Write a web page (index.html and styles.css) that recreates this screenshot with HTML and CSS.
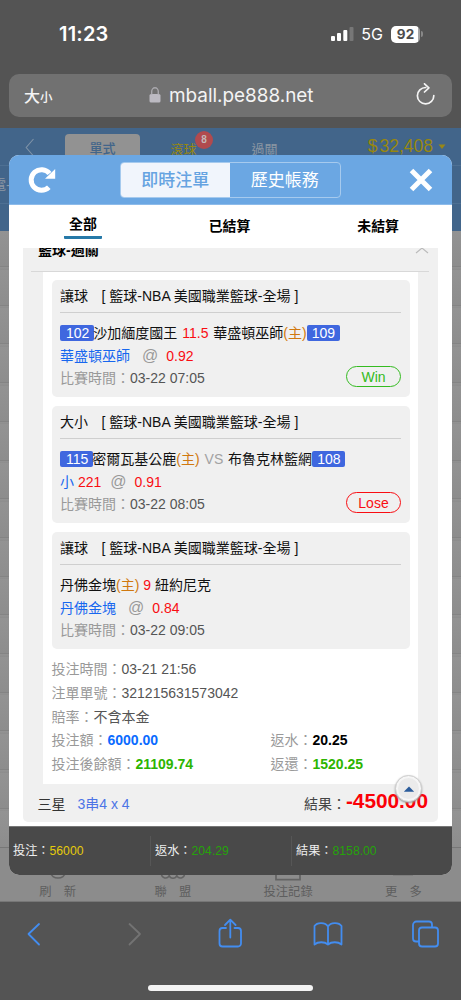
FILE: index.html
```html
<!DOCTYPE html>
<html lang="zh-Hant">
<head>
<meta charset="utf-8">
<title>即時注單</title>
<link rel="stylesheet" href="styles.css">
</head>
<body>
<div class="phone">
  <header class="status">
    <span class="time">11:23</span>
    <div class="status-right">
      <svg class="signal" width="24" height="16" viewBox="0 0 24 16"><rect x="0" y="10" width="4" height="5" rx="1" fill="#fff"/><rect x="6" y="7" width="4" height="8" rx="1" fill="#fff"/><rect x="12.300" y="4" width="4" height="11" rx="1" fill="#fff"/><rect x="18.500" y="1" width="4" height="14" rx="1" fill="#777"/></svg>
      <span class="net">5G</span>
      <span class="battery">92</span>
      <i class="battery-tip"></i>
    </div>
  </header>
  <div class="address">
    <span class="size">大<small>小</small></span>
    <div class="url">
      <svg width="12" height="16" viewBox="0 0 12 16"><rect x="0.5" y="7" width="11" height="8.5" rx="1.6" fill="#bcbac2"/><path d="M2.7 7.5V4.4a3.3 3.6 0 0 1 6.6 0v3.1" fill="none" stroke="#a9a8ad" stroke-width="1.4"/></svg>
      <span>mball.pe888.net</span>
    </div>
    <svg class="reload" width="20" height="24" viewBox="0 0 20 24"><path d="M9.700 4.500A8.200 8.200 0 1 0 17.800 12.600M8.500 .8l4.400 4-4.400 4.200" fill="none" stroke="#f4f4f4" stroke-width="1.7" stroke-linecap="round" stroke-linejoin="round"/></svg>
  </div>

  <main class="page">
    <nav class="topnav">
      <svg class="back" width="10" height="19" viewBox="0 0 10 19"><path d="M8.5 1 1.2 9.5l7.3 8.5" fill="none" stroke="#7f93a8" stroke-width="1.1"/></svg>
      <span class="topnav-tab on">單式</span>
      <span class="topnav-tab live">滾球<b class="badge">8</b></span>
      <span class="topnav-tab">過關</span>
      <span class="balance"><i>$</i>32,408</span>
      <svg class="caret" width="8" height="6" viewBox="0 0 8 6"><path d="M.5.5h7L4 5z" fill="#988717"/></svg>
    </nav>
    <div class="subnav">電-</div>
    <div class="subnav-low"></div>
    <div class="rows"></div>
    <nav class="bottomnav">
      <span><svg width="26" height="14" viewBox="0 0 26 14"><path d="M6 5a7 5 0 0 0 14 0" fill="none" stroke="#636363" stroke-width="1.6"/></svg><em>刷&emsp;新</em></span>
      <span><svg width="26" height="14" viewBox="0 0 26 14"><path d="M1.500 6a4 4 0 0 0 7.700 1.500 4 4 0 0 0 7.600 0A4 4 0 0 0 24.500 6" fill="none" stroke="#636363" stroke-width="1.5"/></svg><em>聯&emsp;盟</em></span>
      <span><svg width="26" height="14" viewBox="0 0 26 14"><path d="M1 0v11.600h24V0" fill="none" stroke="#636363" stroke-width="1.7"/></svg><em>投注記錄</em></span>
      <span><svg width="26" height="14" viewBox="0 0 26 14"><path d="M3 7h20" fill="none" stroke="#777" stroke-width="1.3"/></svg><em>更&emsp;多</em></span>
    </nav>
  </main>

  <footer class="toolbar">
    <svg width="40" height="40" viewBox="0 0 40 40"><path d="M25 10 14.5 20 25 30.5" class="ico"/></svg>
    <svg width="40" height="40" viewBox="0 0 40 40"><path d="M17.5 10 28 20 17.5 30.5" class="ico off"/></svg>
    <svg width="40" height="40" viewBox="0 0 40 40"><path d="M16 14h-3.500a3 3 0 0 0-3 3v12.500a3 3 0 0 0 3 3h15.500a3 3 0 0 0 3-3v-12.500a3 3 0 0 0-3-3h-3.500M20.300 23.500V6M15 11 20.300 5.700 25.600 11" class="ico"/></svg>
    <svg width="40" height="40" viewBox="0 0 40 40"><path d="M21 12.500C18.500 8 10 8 7.500 12v18.500c3.500-3 10-3 13.500 0 3.500-3 10-3 13.500 0V12C32 8 23.500 8 21 12.500zV30.500" class="ico"/></svg>
    <svg width="40" height="40" viewBox="0 0 40 40"><path d="M13.500 27.500h-2.500a3 3 0 0 1-3-3v-13.500a3.500 3.500 0 0 1 3.500-3.500h12.500a3 3 0 0 1 3 3v2.500" class="ico"/><rect x="14" y="13.500" width="19" height="19" rx="3" class="ico"/></svg>
  </footer>
  <i class="home-bar"></i>

  <section class="modal">
    <header class="modal-head">
      <svg class="refresh" width="28" height="28" viewBox="0 0 28 28"><path d="M20.800 21.200A10.300 10.300 0 1 1 21.500 7.500" fill="none" stroke="#fff" stroke-width="5"/><path d="M27.200 3v9.800H17z" fill="#fff"/></svg>
      <div class="switch"><b class="on">即時注單</b><b>歷史帳務</b></div>
      <svg class="close" width="24" height="24" viewBox="0 0 24 24"><path d="M2.500 2.500l19 19M21.500 2.500l-19 19" stroke="#fff" stroke-width="5"/></svg>
    </header>
    <nav class="tabs"><b class="on">全部</b><b>已結算</b><b>未結算</b></nav>
    <div class="scroll">
      <article class="slip">
        <header class="slip-head"><b>籃球-過關</b>
          <svg width="14" height="7" viewBox="0 0 14 7"><path d="M1 5l6-5 6 5" fill="none" stroke="#bbb" stroke-width="1.1"/></svg>
        </header>
        <div class="slip-body">
          <section class="bet">
            <h3>讓球<span>[ 籃球-NBA 美國職業籃球-全場 ]</span></h3>
            <p><i class="no first">102</i>沙加緬度國王 <em class="line">11.5</em> 華盛頓巫師<u>(主)</u><i class="no">109</i></p>
            <p><strong>華盛頓巫師</strong><i class="at">@</i><em>0.92</em></p>
            <p class="when">比賽時間：<span>03-22 07:05</span></p>
            <span class="result win">Win</span>
          </section>
          <section class="bet">
            <h3>大小<span>[ 籃球-NBA 美國職業籃球-全場 ]</span></h3>
            <p><i class="no first">115</i>密爾瓦基公鹿<u>(主)</u> <s class="line">VS</s> 布魯克林籃網<i class="no">108</i></p>
            <p><strong>小</strong> <em>221</em><i class="at near">@</i><em>0.91</em></p>
            <p class="when">比賽時間：<span>03-22 08:05</span></p>
            <span class="result lose">Lose</span>
          </section>
          <section class="bet">
            <h3>讓球<span>[ 籃球-NBA 美國職業籃球-全場 ]</span></h3>
            <p>丹佛金塊<u>(主)</u> <em>9</em> 紐約尼克</p>
            <p><strong>丹佛金塊</strong><i class="at">@</i><em>0.84</em></p>
            <p class="when">比賽時間：<span>03-22 09:05</span></p>
          </section>
          <div class="info">
            <p class="wide">投注時間：<span>03-21 21:56</span></p>
            <p class="wide">注單單號：<span>321215631573042</span></p>
            <p class="wide">賠率：<span>不含本金</span></p>
            <p>投注額：<b class="blue">6000.00</b></p><p>返水：<b class="black">20.25</b></p>
            <p>投注後餘額：<b class="green">21109.74</b></p><p>返還：<b class="green">1520.25</b></p>
          </div>
        </div>
        <footer class="slip-foot"><span>三星</span><span class="combo">3串4 x 4</span><span class="total">結果：</span><b>-4500.00</b></footer>
      </article>
    </div>
    <footer class="sum">
      <span>投注：<i class="gold">56000</i></span>
      <span>返水：<i>204.29</i></span>
      <span>結果：<i>8158.00</i></span>
    </footer>
    <div class="to-top"><svg width="12" height="6" viewBox="0 0 12 6"><path d="M.8 5.700 6 .5l5.200 5.200z" fill="#2b5c9b"/></svg></div>
  </section>
</div>
</body>
</html>
```

FILE: styles.css
```css
* { box-sizing: border-box; }
body, p, h3 { margin: 0; }
i, em { font-style: normal; }
u, s { text-decoration: none; }
svg { display: block; flex: none; }
body { font-family: "Liberation Sans", "Noto Sans CJK TC", sans-serif; font-size: 14px; }

.phone { position: relative; width: 461px; height: 1000px; overflow: hidden; display: flex; flex-direction: column; background: #545454; }

.status { height: 74px; padding: 0 38px 6px 59px; display: flex; align-items: center; justify-content: space-between; color: #fff; font-family: Inter, sans-serif; }
.time { font-size: 20px; font-weight: 600; line-height: 24px; letter-spacing: 0.2px; }
.status-right { display: flex; align-items: center; }
.net { font-size: 16px; line-height: 20px; margin-left: 6px; }
.battery { width: 29px; height: 17px; margin-left: 8px; border-radius: 5px; background: linear-gradient(90deg, #fff 92%, #a5a5a5 92%); color: #4c4c4c; font-size: 13.500px; font-weight: 700; line-height: 17px; text-align: center; }
.battery-tip { width: 2px; height: 6px; margin-left: 1px; border-radius: 0 2px 2px 0; background: #888; }

.address { height: 43px; margin: 0 9px 11px; padding: 0 16px 0 15px; border-radius: 10px; background: #717171; display: flex; align-items: center; color: #f4f4f4; }
.size { font-size: 16px; font-weight: 500; line-height: 20px; width: 125px; padding-top: 3px; }
.size small { font-size: 12.500px; }
.url { display: flex; align-items: center; gap: 8px; flex: 1; font-family: Inter, sans-serif; font-size: 18.900px; white-space: nowrap; }
.url svg { margin-bottom: 1px; }
.reload { margin-bottom: 2px; }

.page { height: 774px; flex: none; display: flex; flex-direction: column; background: #909090; }
.topnav { height: 37px; background: #42658a; display: flex; align-items: center; padding: 0 15px 0 25px; font-size: 13px; color: #8c97a3; }
.topnav-tab { width: 75px; text-align: center; line-height: 29px; margin: 6px 6px 0 0; }
.topnav-tab.on { margin-left: 30px; background: #929292; color: #42658a; border-radius: 4px 4px 0 0; height: 31px; font-weight: 500; }
.topnav-tab.live { position: relative; color: #98870f; }
.badge { position: absolute; left: 49px; top: -4px; width: 18px; height: 18px; border-radius: 50%; background: #b14a4e; color: #c4b9b9; font-size: 10px; line-height: 18px; }
.balance { font-size: 17.500px; color: #98870f; margin: 0 5px 0 auto; white-space: nowrap; }
.balance i { margin-right: 2px; }
.back { margin-top: 2px; }
.subnav { height: 38px; background: #42658a; border-top: 1px solid #4e7093; text-indent: -7px; font-size: 13px; line-height: 37px; color: #8c97a3; }
.subnav-low { height: 28px; background: #42658a; border-top: 1px solid #4e7093; }
.rows { flex: 1; background: repeating-linear-gradient(180deg, #939393 0, #8d8d8d 35px, #848484 35px, #848484 36px, #939393 36px, #8d8d8d 38.700px); }
.bottomnav { height: 55px; border-top: 1px solid #777; border-bottom: 1px solid #777; background: #8c8c8c; display: grid; grid-template-columns: repeat(4, 1fr); color: #5e5e5e; font-size: 12.300px; }
.bottomnav span { display: flex; flex-direction: column; align-items: center; padding-top: 20px; }
.bottomnav em { line-height: 20px; }

.toolbar { height: 65px; padding: 0 16px 2px 14px; display: flex; justify-content: space-between; align-items: center; }
.ico { fill: none; stroke: #438df0; stroke-width: 1.800; stroke-linecap: round; stroke-linejoin: round; }
.ico.off { stroke: #737373; }
.home-bar { width: 165px; height: 6px; border-radius: 3px; background: #f3f3f3; margin: 18px auto 0 148px; }

.modal { position: absolute; left: 9px; top: 155px; width: 443px; height: 720px; border-radius: 10px; overflow: hidden; background: #fff; display: flex; flex-direction: column; }
.modal-head { height: 50px; flex: none; background: #6ba7e3; border-bottom: 1px solid #8dbbea; display: flex; align-items: center; justify-content: space-between; padding: 0 19px; }
.switch { display: flex; width: 221px; height: 36px; border: 1px solid #a6caee; border-radius: 4px; overflow: hidden; margin-right: 5px; }
.switch b { flex: 1; font-weight: 400; font-size: 17px; line-height: 35px; text-align: center; color: #fff; }
.switch .on { background: #f1f5fc; color: #66a3e1; font-weight: 500; }
.tabs { height: 43px; flex: none; display: flex; justify-content: space-between; align-items: center; padding: 0 53px 0 55px; color: #000; font-size: 13.900px; }
.tabs b { line-height: 18px; padding-bottom: 1px; }
.tabs .on { border-bottom: 3px solid #2679a8; padding: 0 5px 3px; border-radius: 1px; margin-top: 1px; }
.scroll { height: 578px; flex: none; overflow: hidden; padding: 0 14px; }
.slip { height: 574px; background: #f0f0f0; border-radius: 0 0 5px 5px; display: flex; flex-direction: column; }
.slip-head { height: 24px; flex: none; margin: 0 9px 0 8px; padding-left: 7px; border-bottom: 1px solid #d8d8d8; display: flex; justify-content: space-between; }
.slip-head b { margin-top: -8px; line-height: 20px; }
.slip-body { height: 512px; flex: none; margin: 0 20px; padding: 8px 8.500px 0; background: #fff; display: flex; flex-direction: column; gap: 9px; }
.bet { position: relative; height: 117px; flex: none; padding: 0 8.500px; border-radius: 5px; background: #f0f0f0; color: #111; white-space: nowrap; }
.bet h3 { height: 33px; border-bottom: 1px solid #cfcfcf; margin-bottom: 9px; font-weight: 400; font-size: 14px; line-height: 32px; }
.bet h3 span { margin-left: 13.500px; }
.bet p { height: 22.500px; line-height: 23px; }
.bet em { color: #f90d12; }
.bet u { color: #d0780f; }
.bet s { color: #a2a2a2; }
.bet .line { margin: 0 1px; }
.bet strong { font-weight: 400; color: #1767ef; }
.no { display: inline-block; height: 16px; padding: 0 5px; border-radius: 2px; background: #3f67df; color: #fff; line-height: 16px; }
.no.first { padding-left: 6px; margin-right: -1px; }
.at { font-size: 16px; line-height: 16px; color: #999; margin: 0 8px 0 12px; }
.at.near { margin-left: 9px; }
.when, .info { color: #999; }
.when span, .info span { color: #555; }
.result { position: absolute; right: 8.500px; bottom: 10px; width: 55px; height: 21px; border: 1px solid; border-radius: 11px; text-align: center; line-height: 20px; }
.win { color: #34bb20; }
.lose { color: #f90d12; }
.info { display: grid; grid-template-columns: 219px 1fr; grid-auto-rows: 23.750px; line-height: 23px; white-space: nowrap; }
.wide { grid-column: span 2; }
.blue { color: #0b6bff; }
.black { color: #000; }
.green { color: #2db500; }
.slip-foot { height: 37px; padding: 0 10px 0 14.500px; display: flex; align-items: center; color: #333; }
.combo { margin-left: 12px; color: #4c74e6; }
.total { margin-left: auto; color: #444; }
.slip-foot b { font-size: 20.800px; color: #fb0007; margin-top: -3px; }
.sum { flex: 1; background: #494949; border-top: 1px solid #777; display: grid; grid-template-columns: 142px 141px 1fr; align-items: center; color: #eee; font-size: 12.200px; }
.sum span { line-height: 30px; padding-left: 4px; border-right: 1px solid #565656; }
.sum span:last-child { border: 0; }
.sum i { color: #25a30a; }
.sum .gold { color: #e5cb0b; }
.to-top { position: absolute; left: 386px; top: 620px; width: 27px; height: 27px; border-radius: 50%; border: 1px solid #d0d0d0; background: #ebebeb; box-shadow: inset 0 0 0 2px #f6f6f6, 0 1px 2px #999; display: grid; place-items: center; }
```
